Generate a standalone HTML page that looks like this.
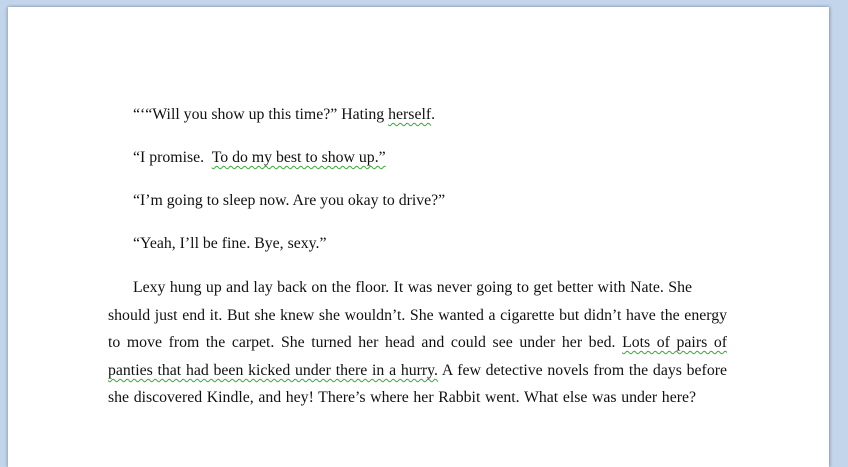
<!DOCTYPE html>
<html><head><meta charset="utf-8"><style>
body{margin:0;width:848px;height:454px;background:#c3d5eb;position:relative;overflow:hidden;font-family:"Liberation Serif",serif;}
.page{position:absolute;left:8px;top:7px;width:821px;height:460px;background:#fff;box-shadow:1px 0 3px #8a9ab0,-1px 0 3px #9aaac0;}
.l{position:absolute;font-size:15.8px;color:#111;white-space:nowrap;line-height:18px;}
.j{text-align:justify;text-align-last:justify;width:619px;left:108px;}
.w{text-decoration:underline wavy #3a3;text-decoration-thickness:1px;text-underline-offset:3px;}
</style></head><body>
<div class="page"></div>
<div class="l" style="left:133px;top:106px">“‘“Will you show up this time?” Hating <span class="w">herself</span>.</div>
<div class="l" style="left:133px;top:149px">“I promise.&nbsp; <span class="w">To do my best to show up.”</span></div>
<div class="l" style="left:133px;top:192px">“I’m going to sleep now. Are you okay to drive?”</div>
<div class="l" style="left:133px;top:235px">“Yeah, I’ll be fine. Bye, sexy.”</div>
<div class="l" style="left:133px;top:279px;width:559px;text-align:justify;text-align-last:justify">Lexy hung up and lay back on the floor. It was never going to get better with Nate. She</div>
<div class="l j" style="top:307px">should just end it. But she knew she wouldn’t. She wanted a cigarette but didn’t have the energy</div>
<div class="l j" style="top:334px">to move from the carpet. She turned her head and could see under her bed. <span class="w">Lots of pairs of</span></div>
<div class="l j" style="top:362px"><span class="w">panties that had been kicked under there in a hurry.</span> A few detective novels from the days before</div>
<div class="l" style="left:108px;top:389px;width:588px;text-align:justify;text-align-last:justify">she discovered Kindle, and hey! There’s where her Rabbit went. What else was under here?</div>
</body></html>
